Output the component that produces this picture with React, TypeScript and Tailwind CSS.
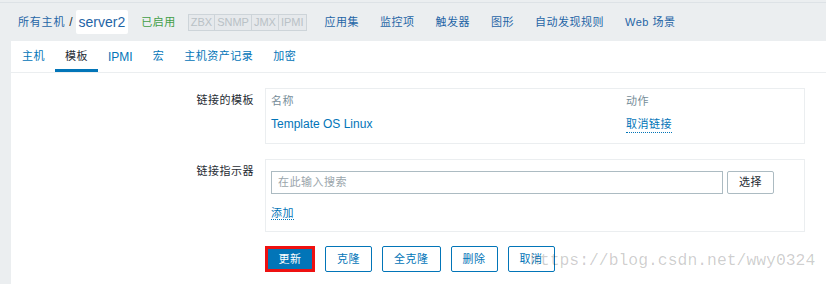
const cjk = "font-['Liberation_Sans','Noto_Sans_CJK_SC',sans-serif]"
const zh = 'text-[11px] tracking-[0.5px]'

const menu = ['应用集', '监控项', '触发器', '图形', '自动发现规则', 'Web 场景']
const tags = ['ZBX', 'SNMP', 'JMX', 'IPMI']
const tabs = ['主机', '模板', 'IPMI', '宏', '主机资产记录', '加密']
const actions = ['克隆', '全克隆', '删除', '取消']

const Header = () => (
  <div className="mt-[2px] flex h-[39px] items-center border-t border-[#dde2e6] pl-[18px]">
    <span className="text-[11px] tracking-[0.8px] text-[#1f65a6]">所有主机</span>
    <span className="ml-[4px] mr-[3px] text-[12px] text-[#1f2c33]">/</span>
    <span className="rounded-[2px] bg-white px-[3px] py-[4px] text-[14px] leading-[16px] text-[#1f65a6]">server2</span>
    <span className={`ml-[13px] ${zh} text-[#429e47]`}>已启用</span>
    <div className="ml-[12px] flex">
      {tags.map((t) => (
        <span
          key={t}
          className="-ml-px border border-[#cdd4d9] bg-[#e6e9ec] px-[2px] text-[11px] leading-[15px] text-[#b9c1c6] first:ml-0"
        >
          {t}
        </span>
      ))}
    </div>
    <div className="ml-[18px] flex gap-[21px]">
      {menu.map((m) => (
        <span key={m} className={`${zh} text-[#1f65a6]`}>
          {m}
        </span>
      ))}
    </div>
  </div>
)

const Tabs = () => (
  <div className="flex h-[32px] border-b border-[#ebeef0] pl-[1px]">
    {tabs.map((t, i) => (
      <div
        key={t}
        className={`flex items-center border-b-[3px] px-[10px] pt-[3px] ${
          i === 1 ? 'border-[#0275b8] text-[#1f2c33]' : 'border-transparent text-[#0275b8]'
        } ${t === 'IPMI' ? 'text-[12px]' : zh}`}
      >
        {t}
      </div>
    ))}
  </div>
)

const Row = ({ label, children }: { label: string; children: React.ReactNode }) => (
  <div className="grid grid-cols-[243px_540px] gap-x-[11px]">
    <div className={`pt-[4px] text-right leading-[16px] ${zh} text-[#1f2c33]`}>{label}</div>
    <div className="border border-[#ebeef0] bg-white px-[5px]">{children}</div>
  </div>
)

const Dotted = ({ children }: { children: React.ReactNode }) => (
  <span className={`border-b border-dotted border-[#0275b8] ${zh} text-[#0275b8]`}>{children}</span>
)

export default function App() {
  return (
    <div className={`relative h-[284px] w-[826px] overflow-hidden bg-[#ebeef0] ${cjk}`}>
      <Header />
      <div className="ml-[11px] h-full bg-white">
        <Tabs />
        <div className="flex flex-col pt-[15px]">
          <Row label="链接的模板">
            <div className={`flex pt-[4px] leading-[16px] ${zh} text-[#768d99]`}>
              <span className="w-[355px]">名称</span>
              <span>动作</span>
            </div>
            <div className="flex pb-[10px] pt-[7px] leading-[16px]">
              <span className="w-[355px] text-[12px] text-[#0275b8]">Template OS Linux</span>
              <Dotted>取消链接</Dotted>
            </div>
          </Row>
          <div className="h-[15px]" />
          <Row label="链接指示器">
            <div className="flex gap-[4px] pt-[11px]">
              <div className={`flex h-[23px] w-[452px] items-center border border-[#acbbc2] px-[6px] ${zh} text-[#9aa5ab]`}>
                在此输入搜索
              </div>
              <button className={`h-[23px] w-[47px] rounded-[2px] border border-[#acbbc2] bg-white ${zh} text-[#1f2c33]`}>
                选择
              </button>
            </div>
            <div className="pb-[10px] pt-[10px] leading-[16px]">
              <Dotted>添加</Dotted>
            </div>
          </Row>
          <div className="ml-[254px] mt-[14px] flex gap-[10px]">
            <button className={`h-[26px] w-[50px] border-[3px] border-[#ee1111] bg-[#0275b8] ${zh} text-white`}>
              更新
            </button>
            {actions.map((a) => (
              <button
                key={a}
                className={`h-[26px] rounded-[2px] border border-[#0275b8] bg-white px-[11px] ${zh} text-[#0275b8]`}
              >
                {a}
              </button>
            ))}
          </div>
        </div>
      </div>
      <div className="pointer-events-none absolute left-[530px] top-[249px] font-['Liberation_Mono',monospace] text-[16.4px] text-[#000]/20">
        https://blog.csdn.net/wwy0324
      </div>
    </div>
  )
}
